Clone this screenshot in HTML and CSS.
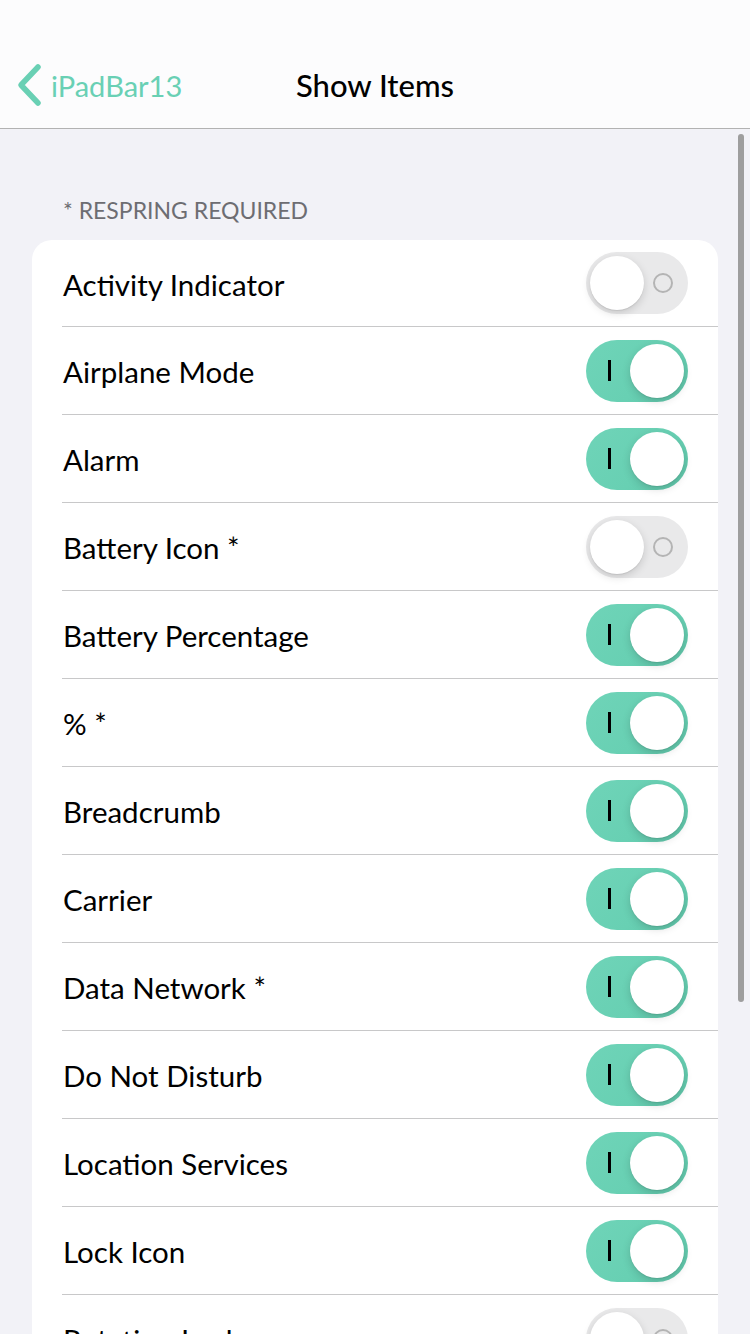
FILE: index.html
```html
<!DOCTYPE html>
<html>
<head>
<meta charset="utf-8">
<link rel="stylesheet" href="styles.css">
</head>
<body>
<div class="nav">
  <div class="back">
    <svg class="chev" width="26" height="44" viewBox="0 0 26 44"><path d="M22 4 L5 22 L22 40" fill="none" stroke="#69d0b4" stroke-width="5.5" stroke-linecap="round" stroke-linejoin="round"/></svg>
    <span class="back-text">iPadBar13</span>
  </div>
  <div class="title">Show Items</div>
</div>
<div class="content">
  <div class="scrollbar"></div>
  <div class="section-header">* RESPRING REQUIRED</div>
  <div class="card">
    <div class="row"><span class="label">Activity Indicator</span><div class="toggle off"><div class="knob"></div><div class="omark"></div></div></div>
    <div class="row"><span class="label">Airplane Mode</span><div class="toggle on"><div class="imark"></div><div class="knob"></div></div></div>
    <div class="row"><span class="label">Alarm</span><div class="toggle on"><div class="imark"></div><div class="knob"></div></div></div>
    <div class="row"><span class="label">Battery Icon *</span><div class="toggle off"><div class="knob"></div><div class="omark"></div></div></div>
    <div class="row"><span class="label">Battery Percentage</span><div class="toggle on"><div class="imark"></div><div class="knob"></div></div></div>
    <div class="row"><span class="label">% *</span><div class="toggle on"><div class="imark"></div><div class="knob"></div></div></div>
    <div class="row"><span class="label">Breadcrumb</span><div class="toggle on"><div class="imark"></div><div class="knob"></div></div></div>
    <div class="row"><span class="label">Carrier</span><div class="toggle on"><div class="imark"></div><div class="knob"></div></div></div>
    <div class="row"><span class="label">Data Network *</span><div class="toggle on"><div class="imark"></div><div class="knob"></div></div></div>
    <div class="row"><span class="label">Do Not Disturb</span><div class="toggle on"><div class="imark"></div><div class="knob"></div></div></div>
    <div class="row"><span class="label">Location Services</span><div class="toggle on"><div class="imark"></div><div class="knob"></div></div></div>
    <div class="row"><span class="label">Lock Icon</span><div class="toggle on"><div class="imark"></div><div class="knob"></div></div></div>
    <div class="row"><span class="label">Rotation Lock</span><div class="toggle off"><div class="knob"></div><div class="omark"></div></div></div>
  </div>
</div>
</body>
</html>
```
FILE: styles.css
```css
* { box-sizing: border-box; }
html, body { margin: 0; padding: 0; }
body {
  width: 750px;
  height: 1334px;
  overflow: hidden;
  background: #f2f2f7;
  font-family: "Lato", "Noto Sans", sans-serif;
  color: #000;
}
.nav {
  height: 129px;
  background: #fcfcfd;
  border-bottom: 1px solid #b2b2b2;
  display: flex;
  align-items: center;
  position: relative;
  padding-top: 42px;
}
.back {
  display: flex;
  align-items: center;
  padding-left: 16px;
  gap: 9px;
}
.back-text {
  font-size: 29px;
  color: #69d0b4;
}
.title {
  position: absolute;
  left: 0;
  right: 0;
  top: 42px;
  bottom: 0;
  display: flex;
  align-items: center;
  justify-content: center;
  font-size: 31px;
  font-weight: 500;
  pointer-events: none;
}
.content {
  position: relative;
  padding: 66px 32px 0 32px;
}
.scrollbar {
  position: absolute;
  right: 6px;
  top: 5px;
  width: 6px;
  height: 868px;
  border-radius: 3px;
  background: #9e9e9e;
}
.section-header {
  font-size: 23px;
  color: #6d6d72;
  padding-left: 31px;
  height: 45px;
  line-height: 30px;
}
.card {
  background: #fff;
  border-radius: 20px;
  overflow: hidden;
}
.row {
  height: 88px;
  margin-left: 30px;
  border-bottom: 1px solid #c8c8c9;
  display: flex;
  align-items: center;
  justify-content: space-between;
  padding-right: 30px;
}
.row:first-child { height: 87px; }
.label {
  font-size: 29.5px;
  padding-left: 1px;
  padding-top: 2px;
}
.toggle {
  width: 102px;
  height: 62px;
  border-radius: 31px;
  display: flex;
  align-items: center;
  padding: 4px;
}
.toggle.on {
  background: linear-gradient(135deg, #6fd4b8 0%, #68d0b3 60%, #5fc5a9 100%);
  justify-content: space-between;
  padding-left: 22px;
}
.toggle.off {
  background: #e9e9ea;
  justify-content: space-between;
  padding-right: 15px;
}
.knob {
  width: 54px;
  height: 54px;
  border-radius: 50%;
  background: #fff;
  box-shadow: 0 3px 8px rgba(0,0,0,0.15), 0 1px 1px rgba(0,0,0,0.08);
}
.imark {
  width: 3px;
  height: 21px;
  background: #000;
}
.omark {
  width: 20px;
  height: 20px;
  border-radius: 50%;
  border: 2px solid #b4b4b4;
}
```
